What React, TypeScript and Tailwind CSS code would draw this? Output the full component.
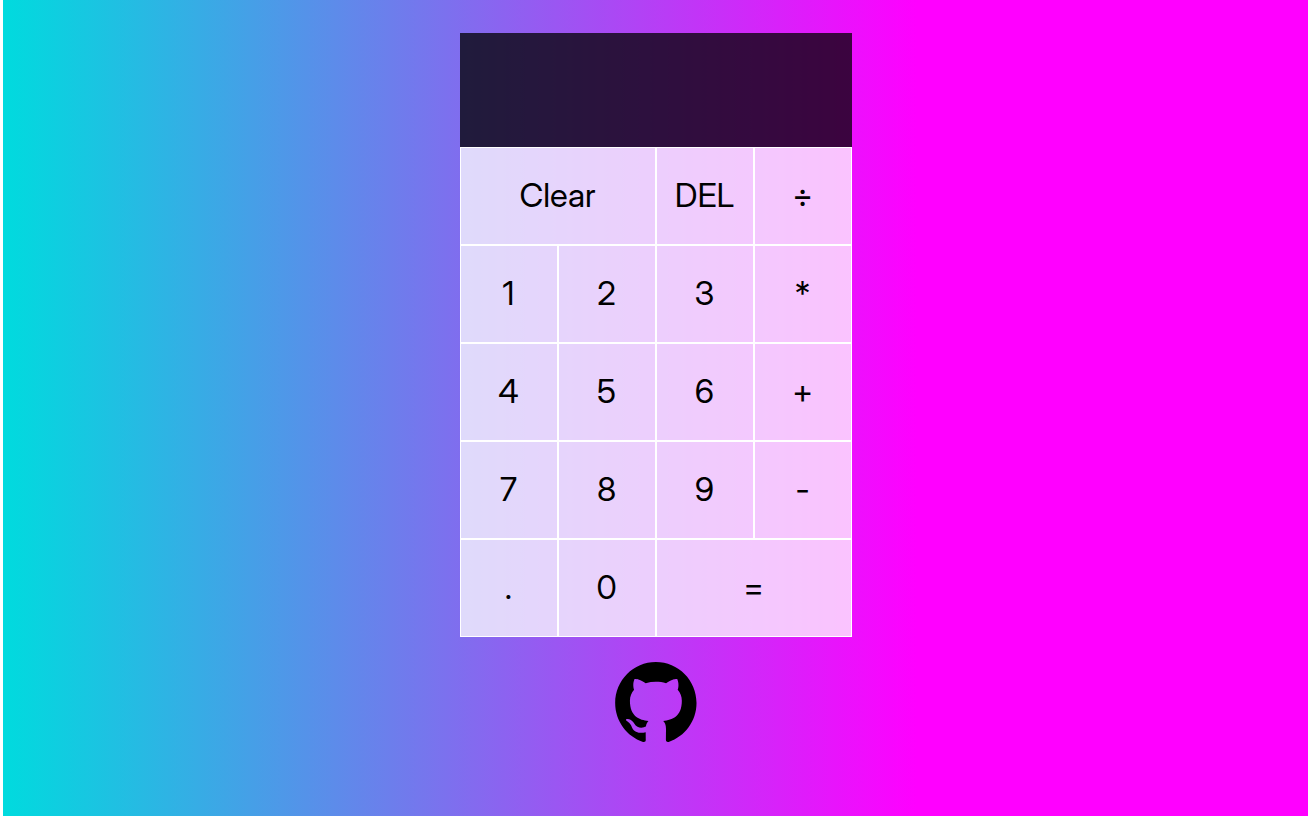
import { useState } from "react";

type Key = { label: string; wide?: boolean; name?: string };

const keys: Key[] = [
  { label: "Clear", wide: true },
  { label: "DEL" },
  { label: "÷", name: "Divide" },
  { label: "1" },
  { label: "2" },
  { label: "3" },
  { label: "*", name: "Multiply" },
  { label: "4" },
  { label: "5" },
  { label: "6" },
  { label: "+", name: "Add" },
  { label: "7" },
  { label: "8" },
  { label: "9" },
  { label: "-", name: "Subtract" },
  { label: ".", name: "Decimal point" },
  { label: "0" },
  { label: "=", wide: true, name: "Equals" },
];

const isOperator = (s: string) => ["÷", "*", "+", "-"].includes(s);

function compute(a: number, op: string, b: number) {
  if (op === "+") return a + b;
  if (op === "-") return a - b;
  if (op === "*") return a * b;
  return a / b;
}

function GithubMark() {
  return (
    <svg viewBox="0 0 98 96" className="h-20 w-[82px]" fill="currentColor" aria-hidden="true">
      <path
        fillRule="evenodd"
        clipRule="evenodd"
        d="M48.854 0C21.839 0 0 22 0 49.217c0 21.756 13.993 40.172 33.405 46.69 2.427.49 3.316-1.059 3.316-2.362 0-1.141-.08-5.052-.08-9.127-13.59 2.934-16.42-5.867-16.42-5.867-2.184-5.704-5.42-7.17-5.42-7.17-4.448-3.015.324-3.015.324-3.015 4.934.326 7.523 5.052 7.523 5.052 4.367 7.496 11.404 5.378 14.235 4.074.404-3.178 1.699-5.378 3.074-6.6-10.839-1.141-22.243-5.378-22.243-24.283 0-5.378 1.94-9.778 5.014-13.2-.485-1.222-2.184-6.275.486-13.038 0 0 4.125-1.304 13.426 5.052a46.97 46.97 0 0 1 12.214-1.63c4.125 0 8.33.571 12.213 1.63 9.302-6.356 13.427-5.052 13.427-5.052 2.67 6.763.97 11.816.485 13.038 3.155 3.422 5.015 7.822 5.015 13.2 0 18.905-11.404 23.06-22.324 24.283 1.78 1.548 3.316 4.481 3.316 9.126 0 6.6-.08 11.897-.08 13.526 0 1.304.89 2.853 3.316 2.364 19.412-6.52 33.405-24.935 33.405-46.691C97.707 22 75.788 0 48.854 0z"
      />
    </svg>
  );
}

export default function App() {
  const [current, setCurrent] = useState("");
  const [previous, setPrevious] = useState("");
  const [operator, setOperator] = useState("");

  function press(label: string) {
    if (label === "Clear") {
      setCurrent("");
      setPrevious("");
      setOperator("");
    } else if (label === "DEL") {
      setCurrent(current.slice(0, -1));
    } else if (label === "=" || isOperator(label)) {
      if (!current) return;
      const result =
        previous && operator
          ? String(compute(Number(previous), operator, Number(current)))
          : current;
      setPrevious(label === "=" ? "" : result);
      setCurrent(label === "=" ? result : "");
      setOperator(label === "=" ? "" : label);
    } else if (label !== "." || !current.includes(".")) {
      setCurrent(current + label);
    }
  }

  return (
    <div className="min-h-screen bg-white px-[3px] font-['Inter_Display','Inter',sans-serif]">
      <main className="flex min-h-screen flex-col items-center bg-linear-[to_right,#00dbde,#ff00ff_70%] pt-[33px]">
        <div className="grid w-[392px] max-w-full grid-cols-4">
          <output className="col-span-4 flex h-[114px] flex-col items-end justify-around bg-black/75 p-3 break-all text-white">
            <span className="text-xl text-white/75">
              {previous} {operator}
            </span>
            <span className="text-4xl">{current}</span>
          </output>
          {keys.map((key) => (
            <button
              key={key.label}
              type="button"
              aria-label={key.name}
              onClick={() => press(key.label)}
              className={`h-[98px] cursor-pointer border border-white bg-white/75 text-[33px] text-black hover:bg-white/90 ${
                key.wide ? "col-span-2" : ""
              }`}
            >
              {key.label}
            </button>
          ))}
        </div>
        <a href="https://github.com" aria-label="GitHub" className="mt-[25px] text-black">
          <GithubMark />
        </a>
      </main>
    </div>
  );
}
